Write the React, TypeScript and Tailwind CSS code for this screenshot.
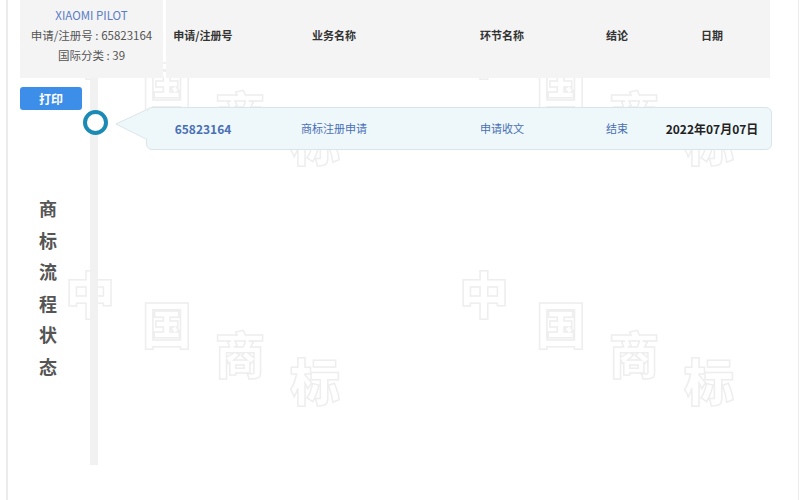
import React from 'react';

const font = { fontFamily: '"Noto Sans CJK SC", "Open Sans", sans-serif' };

const marks = [
  { ch: '中', x: 65, y: 265 },
  { ch: '国', x: 142, y: 295 },
  { ch: '商', x: 215, y: 325 },
  { ch: '标', x: 290, y: 352 },
];

function Watermark() {
  const groups: { ch: string; x: number; y: number }[] = [];
  for (const dx of [0, 394]) {
    for (const dy of [-240, 0]) {
      marks.forEach(m => groups.push({ ch: m.ch, x: m.x + dx, y: m.y + dy }));
    }
  }
  return (
    <div className="pointer-events-none absolute inset-0 z-0 select-none" aria-hidden="true">
      {groups.map((m, i) => (
        <span
          key={i}
          className="absolute text-[50px] font-black leading-[54px] text-transparent [-webkit-text-stroke:1.5px_#eeeeee]"
          style={{ left: m.x, top: m.y }}
        >
          {m.ch}
        </span>
      ))}
    </div>
  );
}

const cols = 'grid grid-cols-[74px_188px_148px_82px_108px] items-center text-center text-[11px]';

export default function App() {
  return (
    <div className="relative h-[500px] w-[800px] overflow-hidden bg-white" style={font}>
      <Watermark />

      <div className="relative z-10 ml-[6px] mr-[1px] h-full border-l-2 border-r border-[#ececec] pl-[12px] pr-[28px]">
        {/* header */}
        <div className="flex h-[78px] gap-[3px]">
          <div className="flex w-[143px] flex-col items-center bg-[#f4f4f4] pt-[5px] text-[11.5px] leading-[20px] text-[#555]">
            <div className="text-[#5b7dc6]">XIAOMI PILOT</div>
            <div>申请/注册号 : 65823164</div>
            <div>国际分类 : 39</div>
          </div>
          <div className={`${cols} flex-1 bg-[#f4f4f4] pb-[7px] font-bold text-[#333]`}>
            <div>申请/注册号</div>
            <div>业务名称</div>
            <div>环节名称</div>
            <div>结论</div>
            <div>日期</div>
          </div>
        </div>

        {/* body */}
        <div className="flex h-[387px]">
          <div className="flex w-[62px] flex-col pt-[9px]">
            <button className="h-[23px] w-full rounded-[3px] bg-[#3d8ee8] text-[12px] font-bold text-white">
              打印
            </button>
            <div className="mt-[83px] flex flex-col items-center pr-[6px] text-[18px] font-bold leading-[31.6px] text-[#555]">
              {'商标流程状态'.split('').map((c, i) => (
                <span key={i}>{c}</span>
              ))}
            </div>
          </div>

          <div className="relative ml-[8px] w-[8px] bg-[#f1f1f1]">
            <div className="absolute left-[-7px] top-[32px] h-[25px] w-[25px] rounded-full border-4 border-[#1b8bb5] bg-white" />
          </div>

          <div className="flex-1 pt-[29px]">
            <div className="relative ml-[48px] -mr-[2px]">
              <svg className="absolute left-[-31px] top-[2px]" width="33" height="32" viewBox="0 0 33 32">
                <polygon points="1,15 32,1 32,30" fill="#eef8fb" />
                <polyline points="31,1 1,15 31,30" fill="none" stroke="#d9e5eb" strokeWidth="1" />
              </svg>
              <div className={`${cols} h-[43px] rounded-[6px] border border-[#d9e5eb] bg-[#eef8fb] pl-[19px]`}>
                <div className="text-[12px] font-bold text-[#4a6fb5]">65823164</div>
                <div className="text-[#4a6fb5]">商标注册申请</div>
                <div className="text-[#4a6fb5]">申请收文</div>
                <div className="text-[#4a6fb5]">结束</div>
                <div className="text-[12px] font-bold text-[#222]">2022年07月07日</div>
              </div>
            </div>
          </div>
        </div>
      </div>
    </div>
  );
}
